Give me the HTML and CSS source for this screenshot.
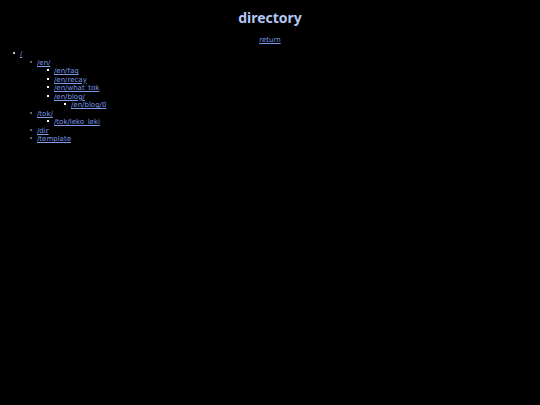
FILE: index.html
```html
<!DOCTYPE html>
<html>
<head>
<meta charset="utf-8">
<link rel="stylesheet" href="styles.css">
<title>directory</title>
</head>
<body>
<h1 class="title">directory</h1>
<p class="back"><a href="#">return</a></p>
<ul class="tree">
  <li><a href="#">/</a>
    <ul>
      <li><a href="#">/en/</a>
        <ul>
          <li><a href="#">/en/faq</a></li>
          <li><a href="#">/en/recay</a></li>
          <li><a href="#">/en/what_tok</a></li>
          <li><a href="#">/en/blog/</a>
            <ul>
              <li><a href="#">/en/blog/0</a></li>
            </ul>
          </li>
        </ul>
      </li>
      <li><a href="#">/tok/</a>
        <ul>
          <li><a href="#">/tok/leko_leki</a></li>
        </ul>
      </li>
      <li><a href="#">/dir</a></li>
      <li><a href="#">/template</a></li>
    </ul>
  </li>
</ul>
</body>
</html>
```
FILE: styles.css
```css
html, body {
  background: #000;
}
body {
  margin: 8px;
  font-family: "DejaVu Sans", sans-serif;
  color: #e0e0e0;
}
.title {
  margin: 1px 0 0 0;
  text-align: center;
  font-family: "Noto Sans", sans-serif;
  font-size: 14px;
  line-height: 18px;
  font-weight: bold;
  color: #b4c6f2;
}
.back {
  margin: 9px 0 0 0;
  text-align: center;
  font-size: 7px;
  line-height: 9px;
}
a {
  color: #7a9ae8;
}
.tree, .tree ul {
  margin: 0;
  padding-left: 17px;
  font-size: 7px;
  line-height: 8.5px;
  list-style: none;
}
.tree {
  margin-top: 5px;
  padding-left: 12px;
}
.tree li::before {
  content: "";
  display: inline-block;
  width: 2px;
  height: 2px;
  margin-left: -7px;
  margin-right: 5px;
  vertical-align: 2px;
  background: #ffffff;
  border-radius: 50%;
}
.tree ul li::before {
  background: #8a8a8a;
}
.tree ul ul li::before {
  border-radius: 0;
  background: #ffffff;
}
```
